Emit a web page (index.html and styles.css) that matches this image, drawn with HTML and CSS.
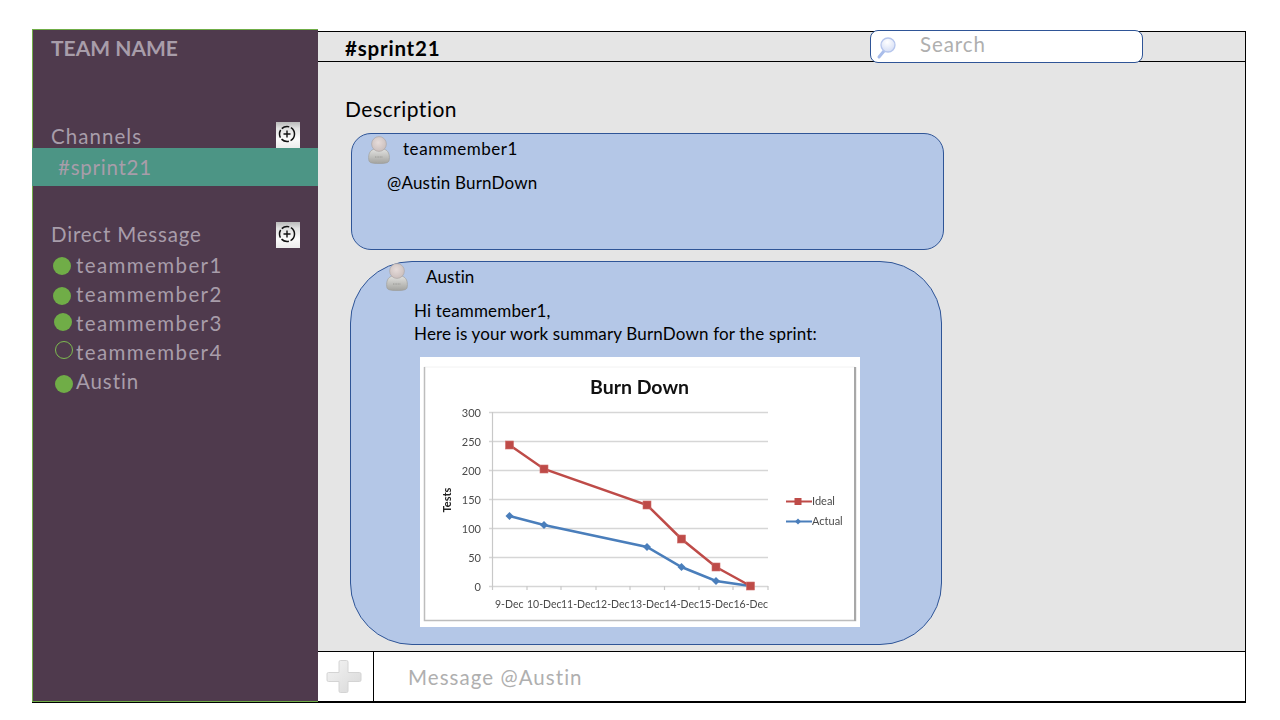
FILE: index.html
```html
<!DOCTYPE html>
<html lang="en">
<head>
<meta charset="utf-8">
<title>#sprint21</title>
<link rel="stylesheet" href="styles.css">
</head>
<body>
<svg class="defs" width="0" height="0" aria-hidden="true">
  <defs>
    <linearGradient id="body-grad" x1="0" y1="0" x2="0" y2="1"><stop offset="0" stop-color="#e4e4e2"/><stop offset="1" stop-color="#a3a39f"/></linearGradient>
    <radialGradient id="head-grad" cx="0.45" cy="0.4" r="0.65"><stop offset="0" stop-color="#e6dcda"/><stop offset="1" stop-color="#c9bdbb"/></radialGradient>
    <linearGradient id="plus-grad" x1="0" y1="0" x2="1" y2="1"><stop offset="0" stop-color="#f4f4f4"/><stop offset="1" stop-color="#d8d8d8"/></linearGradient>
    <symbol id="avatar" viewBox="0 0 24 28">
      <path d="M2 25c-1-5 0-9 3-11 2-1 4-1.500 7-1.500s5 .5 7 1.500c3 2 4 6 3 11-1 2-4 2.500-10 2.500S3 27 2 25z" fill="url(#body-grad)" stroke="#9a9a96" stroke-width=".6"/>
      <path d="M8 21h8" stroke="#8f8f8b" stroke-width=".8" stroke-dasharray="1 .6"/>
      <circle cx="12" cy="8" r="7.400" fill="url(#head-grad)" stroke="#a8a3a1" stroke-width=".6"/>
    </symbol>
    <symbol id="add-circle" viewBox="0 0 24 26">
      <circle cx="11" cy="12" r="7.500" fill="none" stroke="#111" stroke-width="1.500" stroke-dasharray="8 1.800"/>
      <path d="M7.500 12h7M11 8.500v7" stroke="#111" stroke-width="1.400"/>
    </symbol>
  </defs>
</svg>
<div class="frame">
  <aside class="sidebar">
    <div class="team">TEAM NAME</div>
    <div class="section section-channels">
      <span>Channels</span>
      <button class="add" aria-label="Add channel"><svg width="24" height="26"><use href="#add-circle"/></svg></button>
    </div>
    <div class="channel">#sprint21</div>
    <div class="section section-dm">
      <span>Direct Message</span>
      <button class="add" aria-label="Add message"><svg width="24" height="26"><use href="#add-circle"/></svg></button>
    </div>
    <ul class="members">
      <li class="member"><i class="dot dot-a"></i>teammember1</li>
      <li class="member"><i class="dot dot-b"></i>teammember2</li>
      <li class="member"><i class="dot dot-c"></i>teammember3</li>
      <li class="member"><i class="dot dot-d"></i>teammember4</li>
      <li class="member"><i class="dot dot-e"></i>Austin</li>
    </ul>
  </aside>
  <main class="main">
    <header class="header">
      <h1 class="title">#sprint21</h1>
      <div class="search">
        <svg class="search-icon" width="22" height="24" viewBox="0 0 22 24">
          <defs><radialGradient id="lens" cx="0.45" cy="0.3" r="0.7"><stop offset="0" stop-color="#ffffff"/><stop offset="1" stop-color="#d5def5"/></radialGradient></defs>
          <path d="M8 15 3 21" stroke="#a9bdea" stroke-width="3" stroke-linecap="round"/>
          <circle cx="12" cy="9" r="7" fill="url(#lens)" stroke="#b5c5ec" stroke-width="1.300"/>
        </svg>
        <span>Search</span>
      </div>
    </header>
    <section class="feed">
      <div class="description">Description</div>
      <article class="bubble bubble-one">
        <div class="author author-one"><svg class="avatar" width="24" height="28"><use href="#avatar"/></svg><span>teammember1</span></div>
        <p class="msg-one">@Austin BurnDown</p>
      </article>
      <article class="bubble bubble-two">
        <div class="author author-two"><svg class="avatar" width="24" height="28"><use href="#avatar"/></svg><span>Austin</span></div>
        <p class="msg-two">Hi teammember1,<br>Here is your work summary BurnDown for the sprint:</p>
        <svg class="chart" width="440" height="270" viewBox="420 357 440 270">
          <path d="M424 367H855" stroke="#f2f2f2" fill="none"/>
          <path d="M424.500 367V620.500H855.500V367" stroke="#bdbdbd" stroke-width="1.500" fill="none"/>
          <path d="M855 367V621" stroke="#a8a8a8" stroke-width="2" fill="none"/>
          <path d="M489 412.500H768M489 441.500H768M489 470.500H768M489 499.500H768M489 528.500H768M489 557.500H768M489 586.500H768" stroke="#d6d6d6" stroke-width="1.500" fill="none"/>
          <path d="M492.500 412V586M492.500 586v4M527 586v4M561 586v4M596 586v4M630 586v4M664.500 586v4M699 586v4M733 586v4M768 586v4" stroke="#c8c8c8" stroke-width="1.200" fill="none"/>
          <text class="chart-title" x="639.500" y="394" text-anchor="middle">Burn Down</text>
          <g class="tick" text-anchor="end">
            <text x="481" y="417">300</text><text x="481" y="446">250</text><text x="481" y="475">200</text><text x="481" y="504">150</text><text x="481" y="533">100</text><text x="481" y="562">50</text><text x="481" y="590.500">0</text>
          </g>
          <text class="axis-title" transform="translate(451 500) rotate(-90)" text-anchor="middle">Tests</text>
          <g class="tick-x">
            <text x="495" y="608">9-Dec</text><text x="527" y="608">10-Dec</text><text x="561" y="608">11-Dec</text><text x="595" y="608">12-Dec</text><text x="630" y="608">13-Dec</text><text x="664.500" y="608">14-Dec</text><text x="699" y="608">15-Dec</text><text x="733.500" y="608">16-Dec</text>
          </g>
          <polyline points="509.500,516 544,525 647,547 681.500,567 716,581 750.500,586" fill="none" stroke="#4a7ebb" stroke-width="2.500"/>
          <polyline points="509.500,445 544,469 647,505 681.500,539 716,567 750.500,586" fill="none" stroke="#be4b48" stroke-width="2.500"/>
          <g fill="#4a7ebb">
            <path d="M509.500 512l4 4-4 4-4-4zM544 521l4 4-4 4-4-4zM647 543l4 4-4 4-4-4zM681.500 563l4 4-4 4-4-4zM716 577l4 4-4 4-4-4z"/>
          </g>
          <g fill="#be4b48" stroke="#cf6f6c" stroke-width=".6">
            <rect x="505.500" y="441" width="8" height="8"/><rect x="540" y="465" width="8" height="8"/><rect x="643" y="501" width="8" height="8"/><rect x="677.500" y="535" width="8" height="8"/><rect x="712" y="563" width="8" height="8"/><rect x="746.500" y="582" width="8" height="8"/>
          </g>
          <path d="M786 501.500H812" stroke="#be4b48" stroke-width="2"/>
          <rect x="794.500" y="498" width="7" height="7" fill="#be4b48"/>
          <path d="M786 521.500H812" stroke="#4a7ebb" stroke-width="2"/>
          <path d="M798 518.500l3 3-3 3-3-3z" fill="#4a7ebb"/>
          <text class="legend" x="812" y="505">Ideal</text>
          <text class="legend" x="812" y="525">Actual</text>
        </svg>
      </article>
    </section>
    <footer class="composer">
      <div class="attach">
        <svg width="36" height="33" viewBox="0 0 36 33"><path d="M13 2a1.500 1.500 0 0 1 1.500-1.500h6A1.500 1.500 0 0 1 22 2v10.500h11.500A1.500 1.500 0 0 1 35 14v6a1.500 1.500 0 0 1-1.500 1.500H22V31a1.500 1.500 0 0 1-1.500 1.500h-6A1.500 1.500 0 0 1 13 31v-9.500H2.500A1.500 1.500 0 0 1 1 20v-6a1.500 1.500 0 0 1 1.500-1.500H13z" fill="url(#plus-grad)" stroke="#d4d4d4"/></svg>
      </div>
      <div class="message-input">Message @Austin</div>
    </footer>
  </main>
</div>
</body>
</html>
```
FILE: styles.css
```css
* { box-sizing: border-box; }
html, body { margin: 0; padding: 0; background: #fff; }
body { font-family: Lato, "Open Sans", sans-serif; width: 1280px; height: 720px; overflow: hidden; }
.defs { display: block; height: 0; }

.frame {
  display: flex;
  width: 1214px;
  height: 674px;
  margin: 29px 0 0 32px;
  border-bottom: 1px solid #000;
}

.sidebar {
  width: 286px;
  flex: none;
  background: #4f3a4d;
  color: #a89daa;
  box-shadow: inset 1px 0 #70ad47, inset 0 1px #70ad47, inset 0 -1px #70ad47;
  font-size: 20.500px;
}
.team { height: 93px; padding: 5px 0 0 19px; font-size: 21px; font-weight: 700; line-height: 28px; }
.section { display: flex; align-items: center; justify-content: space-between; height: 26px; padding: 0 18px 0 19px; }
.section-channels span { letter-spacing: 1.05px; position: relative; top: 1px; }
.section-dm { margin-top: 36px; }
.section-dm span { letter-spacing: .8px; position: relative; top: -1px; }
.add {
  width: 24px; height: 26px; padding: 0; border: 0; display: block;
  background: linear-gradient(180deg, #b9b9b9 0%, #e2e2e2 25%, #fbfbfb 65%, #ececec 100%);
}
.add svg { display: block; }
.channel { height: 38px; background: #4c9585; padding-left: 26px; line-height: 39px; letter-spacing: .75px; }
.members { list-style: none; margin: 4px 0 0; padding: 0; }
.member { display: flex; align-items: center; height: 29px; padding: 0 0 3px 44px; position: relative; letter-spacing: 1.4px; }
.dot { position: absolute; width: 18px; height: 18px; border-radius: 50%; background: #70ad47; }
.dot-a { left: 21px; top: 5px; }
.dot-b { left: 21px; top: 6px; }
.dot-c { left: 22px; top: 3px; }
.dot-d { left: 23px; top: 2px; background: none; border: 1px solid #7dbb4f; }
.dot-e { left: 23px; top: 7px; }
.member:last-child { letter-spacing: .9px; }

.main { flex: 1; display: flex; flex-direction: column; margin-top: 2px; background: #e5e5e5; border-top: 1px solid #000; border-right: 1px solid #000; min-width: 0; }
.header { height: 30px; flex: none; display: flex; align-items: center; justify-content: space-between; border-bottom: 1px solid #000; padding: 0 102px 0 27px; position: relative; }
.title { margin: 0; font-size: 20.500px; font-weight: 700; color: #000; line-height: 30px; letter-spacing: .8px; position: relative; top: 1px; }
.search {
  width: 273px; height: 33px; margin-top: -1px;
  display: flex; align-items: center; gap: 22px; padding-left: 5px;
  background: #fff; border: 1px solid #2f5597; border-radius: 8px;
  color: #afafaf; font-size: 20.500px; letter-spacing: .9px;
}
.search span { position: relative; top: -2px; }
.search-icon { flex: none; margin-top: 4px; }

.feed { flex: 1; min-height: 0; padding: 0 0 0 27px; }
.description { height: 41px; padding-top: 33px; font-size: 21px; line-height: 28px; color: #000; letter-spacing: .5px; margin-bottom: 30px; }
.bubble { background: #b4c7e7; border: 1px solid #2f5597; color: #000; font-size: 17px; line-height: 23px; }
.bubble-one { width: 593px; height: 117px; margin-left: 6px; border-radius: 20px; }
.bubble-two { width: 592px; height: 384px; margin: 11px 0 0 5px; border-radius: 62px; }
.author { display: flex; align-items: flex-start; }
.avatar { flex: none; display: block; }
.author-one { padding: 2px 0 0 15px; gap: 12px; }
.author-one span { margin-top: 1px; letter-spacing: .55px; }
.author-two { padding: 1px 0 0 34px; gap: 17px; }
.author-two span { margin-top: 2px; letter-spacing: .1px; }
.msg-one { margin: 7px 0 0 35px; letter-spacing: .2px; }
.msg-two { margin: 8px 0 0 63px; letter-spacing: .17px; }
.chart { display: block; margin: 12px 0 0 69px; background: #fff; filter: blur(.35px); }
.chart text { font-family: Lato, "Open Sans", sans-serif; }
.chart-title { font-size: 19.500px; font-weight: 700; fill: #111; }
.tick text { font-size: 11px; fill: #4a4a4a; }
.tick-x text { font-size: 10.500px; fill: #4a4a4a; }
.axis-title { font-size: 11px; font-weight: 700; fill: #222; }
.legend { font-size: 11px; fill: #4a4a4a; }

.composer { height: 51px; flex: none; display: flex; background: #fff; border-top: 1px solid #000; border-bottom: 1px solid #000; }
.attach { width: 56px; flex: none; display: flex; align-items: center; justify-content: center; border-right: 1px solid #000; padding-right: 4px; }
.message-input { padding-left: 34px; font-size: 20.500px; line-height: 50px; color: #afafaf; letter-spacing: 1.05px; }
```
